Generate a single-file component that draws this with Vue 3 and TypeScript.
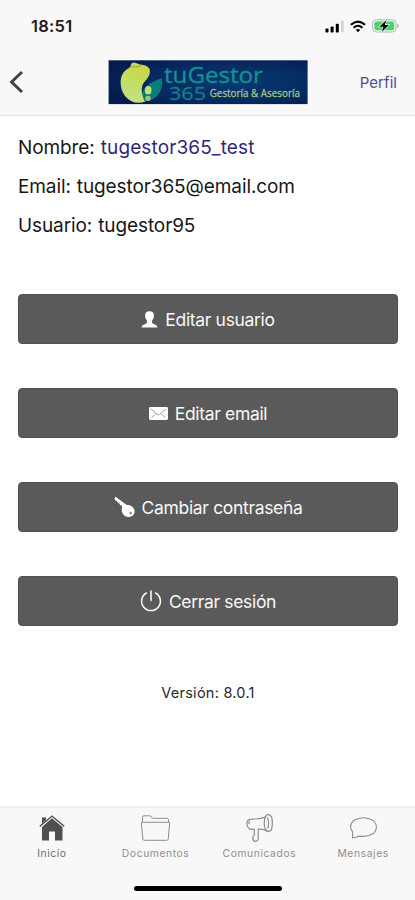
<script setup lang="ts">
interface Action {
  icon: 'user' | 'mail' | 'key' | 'power'
  label: string
}
interface Tab {
  icon: 'home' | 'folder' | 'megaphone' | 'chat'
  label: string
}

const actions: Action[] = [
  { icon: 'user', label: 'Editar usuario' },
  { icon: 'mail', label: 'Editar email' },
  { icon: 'key', label: 'Cambiar contraseña' },
  { icon: 'power', label: 'Cerrar sesión' },
]
const tabs: Tab[] = [
  { icon: 'home', label: 'Inicio' },
  { icon: 'folder', label: 'Documentos' },
  { icon: 'megaphone', label: 'Comunicados' },
  { icon: 'chat', label: 'Mensajes' },
]
</script>

<template>
  <div class="screen">
    <header class="top">
      <div class="status">
        <span class="time">18:51</span>
        <div class="indicators">
          <svg width="20" height="13" viewBox="0 0 20 13">
            <rect x="0.5" y="8.5" width="3" height="4" rx="0.8" />
            <rect x="5.6" y="6.5" width="3" height="6" rx="0.8" />
            <rect x="10.8" y="3.8" width="3" height="8.7" rx="0.8" />
            <rect x="16" y="0.8" width="2.6" height="11.7" rx="0.8" fill="#d2d2d4" />
          </svg>
          <svg class="wifi" width="16" height="13" viewBox="0 0 16 13" fill="none" stroke="#000" stroke-width="2.1">
            <path d="M0.9 4.8Q8 -1.6 15.1 4.8M3.6 7.7Q8 3.8 12.4 7.7" />
            <path d="M5.7 9.8Q8 8 10.3 9.8L8 12.2Z" fill="#000" stroke="none" />
          </svg>
          <svg class="battery" width="28" height="14" viewBox="0 0 28 14">
            <rect x="0.6" y="0.8" width="23.4" height="12.2" rx="3.6" fill="#f7f7f7" stroke="#b4b6b5" />
            <rect x="2.4" y="2.5" width="19.8" height="8.8" rx="2" fill="#43d765" />
            <path d="M25.3 4.5Q28.3 6.9 25.3 9.3Z" fill="#aaa" />
            <path d="M14.5 1L7.3 7.7H11.4L9.8 13L16.9 6H12.8Z" stroke="#f7f7f7" stroke-width="1.3" paint-order="stroke" />
          </svg>
        </div>
      </div>
      <nav class="navbar">
        <svg class="back" width="15" height="24" viewBox="0 0 15 24">
          <path d="M13 2L2.6 12L13 22" fill="none" stroke="#434343" stroke-width="3" />
        </svg>
        <svg class="logo" width="200" height="45" viewBox="0 0 200 45">
          <defs>
            <radialGradient id="sea" cx="62%" cy="50%" r="70%">
              <stop offset="0" stop-color="#073a73" />
              <stop offset="0.55" stop-color="#062c62" />
              <stop offset="1" stop-color="#051b4b" />
            </radialGradient>
            <linearGradient id="leaf" x1="0.6" y1="0" x2="0.35" y2="1">
              <stop offset="0" stop-color="#c7d83f" />
              <stop offset="1" stop-color="#c2e287" />
            </linearGradient>
          </defs>
          <rect x="0.6" y="0.3" width="199" height="43.8" fill="url(#sea)" />
          <path d="M54 18.5C46 20 35.5 26 33.8 34Q33 39 36.5 41.8C49 40 55.5 31 54 18.5Z" fill="#087e7b" />
          <path d="M22.8 5.5Q22.8 2.6 26.5 2.5L32.2 4.5Q42 5 41.9 11.7C41.8 19 34.4 20.5 33.8 28.5Q33.6 36 37 41.8Q25 45.5 17 36C11.5 29 12 19 14.2 14.8C16.5 9 22 9 22.8 5.5Z" fill="url(#leaf)" />
          <path d="M23 6.7Q30 7.8 33.5 4.8" fill="none" stroke="#769c49" stroke-width="0.8" />
          <ellipse cx="40.2" cy="30.5" rx="3.3" ry="4.4" fill="#c5df70" />
          <circle cx="40" cy="38.2" r="2.7" fill="#9bc678" />
          <path d="M36.3 36Q40 33.6 43.7 36" fill="none" stroke="#087e7b" stroke-width="1.2" />
          <g font-family="'Open Sans', sans-serif">
            <text x="56" y="23.3" font-size="22.5" fill="#15938e" stroke="#15938e" stroke-width="0.3" textLength="99" lengthAdjust="spacingAndGlyphs">tuGestor</text>
            <text x="61" y="39.6" font-size="18.5" fill="#108089" stroke="#108089" stroke-width="0.3" textLength="37" lengthAdjust="spacingAndGlyphs">365</text>
            <text x="101.7" y="36.6" font-size="10.5" fill="#9ec67d" stroke="#9ec67d" stroke-width="0.3" textLength="90.3" lengthAdjust="spacingAndGlyphs">Gestoría &amp; Asesoría</text>
          </g>
        </svg>
        <a class="profile">Perfil</a>
      </nav>
    </header>

    <main class="content">
      <dl class="details">
        <div class="row"><dt>Nombre:</dt><dd class="accent">tugestor365_test</dd></div>
        <div class="row"><dt>Email:</dt><dd>tugestor365@email.com</dd></div>
        <div class="row"><dt>Usuario:</dt><dd>tugestor95</dd></div>
      </dl>

      <div class="actions">
        <button v-for="action in actions" :key="action.icon" type="button" class="action">
          <svg v-if="action.icon === 'user'" width="17" height="17" viewBox="0 0 17 17" fill="#fff">
            <path d="M8.5 0.2C5.3 0.2 3.9 2.2 4.1 4.8C4.2 7.4 5.2 8.6 6 9.7V11.7C5 13.4 1 13.2 0.5 16.4H16.5C16 13.2 12 13.4 11 11.7V9.7C11.8 8.6 12.8 7.4 12.9 4.8C13.1 2.2 11.7 0.2 8.5 0.2Z" />
          </svg>
          <svg v-else-if="action.icon === 'mail'" width="19" height="13" viewBox="0 0 19 13">
            <rect width="19" height="13" rx="1.4" fill="#fff" />
            <path d="M2 2L8.2 7.3Q9.5 8.4 10.8 7.3L17 2M2.5 10.7L6.6 6.9M16.5 10.7L12.4 6.9" fill="none" stroke="#777" stroke-width="0.7" />
          </svg>
          <svg v-else-if="action.icon === 'key'" width="21" height="22" viewBox="0 0 21 22">
            <path d="M1.6 0.8L0.5 2.3L1.2 4.3L3.1 5.2L3.7 6.6L5.3 7.2L6 8.9L7.7 9.6L8.2 11.3C6.6 15.2 9 20.9 14.3 21C18.5 21 21 18 20.5 14.6C20 10.9 16.3 8.8 12.7 9Z" fill="#fff" />
            <circle cx="16.7" cy="17.1" r="1.3" fill="#888" />
          </svg>
          <svg v-else width="22" height="22" viewBox="0 0 22 22" fill="none" stroke="#fff" stroke-width="1.5" stroke-linecap="round">
            <path d="M11 1V10.5M6.4 3A9.4 9.4 0 1 0 15.6 3" />
          </svg>
          <span>{{ action.label }}</span>
        </button>
      </div>
      <p class="version">Versión: 8.0.1</p>
    </main>

    <footer class="bottom">
      <nav class="tabs">
        <a v-for="tab in tabs" :key="tab.icon" class="tab" :class="tab.icon">
          <svg v-if="tab.icon === 'home'" width="26" height="26" viewBox="0 0 26 26">
            <path d="M3 2.5H7V5L3 8.5ZM13 3L23.5 12V25.5H16V16.5H10V25.5H3V12Z" fill="#505050" />
            <path d="M0.8 11.3L13 1.2L25.2 11.3" fill="none" stroke="#555" stroke-width="1.5" />
            <path d="M1.5 12.2L13 2.8L24.5 12.2" fill="none" stroke="#f8f8f8" stroke-width="0.8" />
          </svg>
          <svg v-else-if="tab.icon === 'folder'" width="31" height="26" viewBox="0 0 31 26" fill="none" stroke="#8d8d8d" stroke-width="1" stroke-linejoin="round">
            <path d="M2.5 7.3V2.2Q2.5 0.8 4 0.8H9.7Q11 0.8 11.4 2Q11.8 3.3 13.4 3.3H27.2Q28.5 3.3 28.5 4.8V7.3" />
            <path d="M1.3 7.3H29.7L28.2 24.2Q28.1 25.3 26.8 25.3H4.3Q3 25.3 2.9 24.2Z" />
          </svg>
          <svg v-else-if="tab.icon === 'megaphone'" width="27" height="28" viewBox="0 0 27 28" fill="none" stroke="#8d8d8d" stroke-width="1.2" stroke-linejoin="round">
            <path d="M19.8 2.8C13 6.6 9.5 4.1 4 5.4C0 6.5 0.2 11.2 2.5 13.8C4 16 6.4 15.5 8.3 15.3V21Q6.4 22.2 6.8 24.8Q7.2 27.3 9.6 27.3Q12 27.3 12.2 24.8V15.2Q17.6 14.7 21.8 17.5" />
            <path d="M21 0.8Q23 0.2 24.6 1.8Q26.4 3.3 26.3 9.2Q26.2 14.8 24.7 16.5Q23 18 21.3 17.2C17.4 14.5 17.2 4.4 21 0.8ZM21.5 3.5Q23.5 9 21.8 14.5M3.4 7.1L2.8 10.2" />
          </svg>
          <svg v-else width="27" height="22" viewBox="0 0 27 22" fill="none" stroke="#8d8d8d" stroke-width="1.1" stroke-linejoin="round">
            <path d="M2.6 21V14.6Q0.6 12.4 0.6 9.9C0.6 4.6 6.2 0.7 13.5 0.7S26.4 4.7 26.4 10.1S20.8 19.4 13.5 19.4H7.9Q5.8 20.6 2.6 21Z" />
          </svg>
          <span>{{ tab.label }}</span>
        </a>
      </nav>
      <div class="home-bar"></div>
    </footer>
  </div>
</template>

<style>
body { margin: 0; }
</style>

<style scoped>
.screen {
  display: flex;
  flex-direction: column;
  width: 415px;
  height: 900px;
  overflow: hidden;
  box-sizing: border-box;
  background: #fff;
  color: #171717;
  font-family: Inter, "Liberation Sans", sans-serif;
}
.top {
  height: 116px;
  box-sizing: border-box;
  background: #f8f8f8;
  border-bottom: 1px solid #e2e3e5;
  flex: none;
}
.status {
  height: 52px;
  box-sizing: border-box;
  padding: 0 15px 0 31px;
  display: flex;
  justify-content: space-between;
  align-items: center;
}
.time { font-size: 16.5px; font-weight: 600; letter-spacing: 0.25px; color: #202020; }
.indicators { display: flex; align-items: center; }
.wifi { margin-left: 5px; }
.battery { margin-left: 6px; }
.navbar {
  height: 62px;
  display: grid;
  grid-template-columns: 108px 200px 1fr;
  align-items: center;
}
.back { margin-left: 9px; margin-top: -3px; }
.logo { margin-top: -1px; display: block; }
.profile { justify-self: end; margin-right: 18px; margin-top: -1px; font-size: 15px; letter-spacing: 0.05px; color: #514c8d; }
.content { flex: 1; padding: 12px 17px 0 18px; }
.details { margin: 0; }
.row {
  display: flex;
  gap: 6px;
  height: 39px;
  line-height: 39px;
  font-size: 19px;
  letter-spacing: -0.1px;
  white-space: nowrap;
}
dt, dd { margin: 0; }
.accent { color: #302879; letter-spacing: 0.12px; }
.actions { margin-top: 49px; display: flex; flex-direction: column; gap: 44px; }
.action {
  width: 100%;
  height: 50px;
  padding: 0;
  display: flex;
  align-items: center;
  justify-content: center;
  gap: 7px;
  border: 1px solid #505050;
  border-radius: 4px;
  background: #5a5a5a;
  color: #f8f8f8;
  font: 17.5px Inter, sans-serif;
  letter-spacing: -0.33px;
}
.version { margin: 57px 0 0; text-align: center; font-size: 14.5px; letter-spacing: 0.25px; line-height: 20px; color: #292929; }
.bottom {
  flex: none;
  height: 94px;
  box-sizing: border-box;
  border-top: 2px solid #eee;
  background: #f8f8f8;
}
.tabs { height: 78px; display: grid; grid-template-columns: repeat(4, 1fr); }
.tab {
  display: grid;
  grid-template-rows: 36px 14px;
  justify-items: center;
  align-items: center;
  align-content: start;
  padding-top: 2px;
  color: #8e8e8e;
  font-size: 10.3px;
  letter-spacing: 0.6px;
}
.tab.home { color: #696969; }
.home-bar { width: 148px; height: 5px; border-radius: 3px; background: #000; margin: 0 auto; }
</style>
